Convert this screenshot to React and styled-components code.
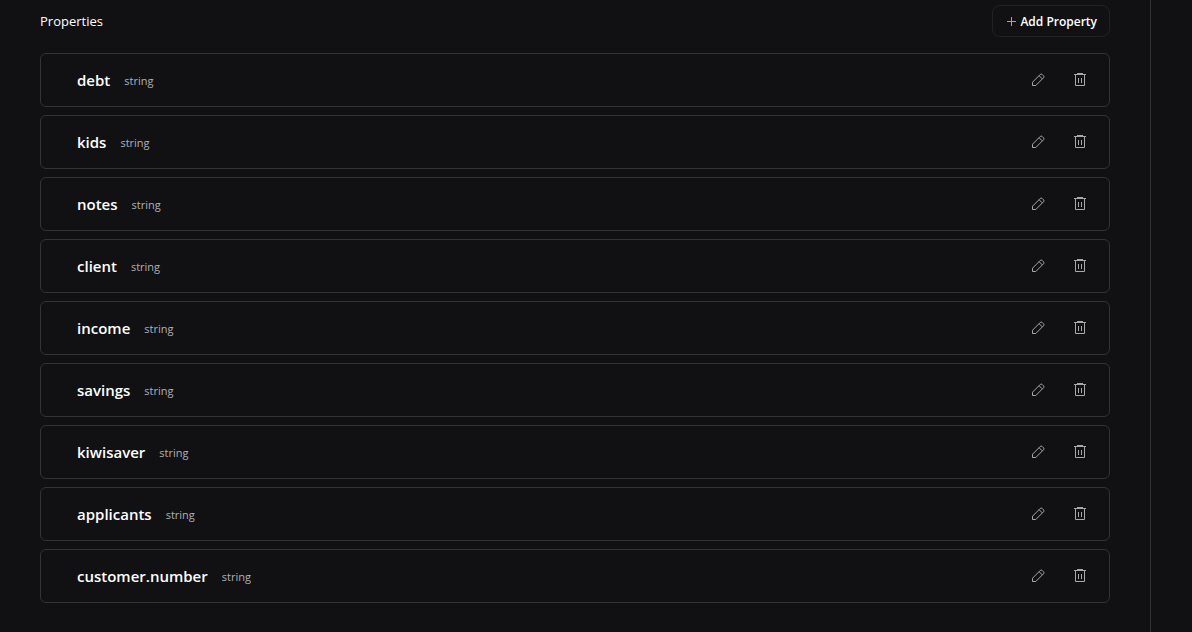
import React from "react";
import styled, { createGlobalStyle } from "styled-components";

const GlobalStyle = createGlobalStyle`
  * {
    box-sizing: border-box;
  }
  body {
    margin: 0;
    background-color: #111113;
    color: #ffffff;
    font-family: "Segoe UI", "Open Sans", "Noto Sans", sans-serif;
  }
`;

const properties = [
  { name: "debt", type: "string" },
  { name: "kids", type: "string" },
  { name: "notes", type: "string" },
  { name: "client", type: "string" },
  { name: "income", type: "string" },
  { name: "savings", type: "string" },
  { name: "kiwisaver", type: "string" },
  { name: "applicants", type: "string" },
  { name: "customer.number", type: "string" },
];

const Page = styled.div`
  display: flex;
  min-height: 100vh;
  padding-right: 41px;
`;

const Panel = styled.main`
  flex: 1;
  padding: 5px 40px 29px;
  border-right: 1px solid #333336;
`;

const Header = styled.header`
  display: flex;
  align-items: center;
  justify-content: space-between;
  margin-bottom: 16px;
`;

const Title = styled.h2`
  margin: 0;
  font-size: 13px;
  font-weight: 400;
  line-height: 20px;
`;

const AddButton = styled.button`
  display: flex;
  align-items: center;
  gap: 3px;
  height: 32px;
  padding: 0 12px;
  border: 1px solid #222225;
  border-radius: 8px;
  background-color: transparent;
  color: #ffffff;
  font-family: inherit;
  font-size: 12px;
  font-weight: 600;
  cursor: pointer;
`;

const PropertyList = styled.ul`
  display: flex;
  flex-direction: column;
  gap: 8px;
  margin: 0;
  padding: 0;
  list-style: none;
`;

const PropertyRow = styled.li`
  display: flex;
  align-items: center;
  justify-content: space-between;
  height: 54px;
  padding: 0 15px 0 36px;
  border: 1px solid #333336;
  border-radius: 6px;
`;

const PropertyLabel = styled.div`
  display: flex;
  align-items: flex-start;
  gap: 14px;
  padding-top: 2px;
`;

const PropertyName = styled.span`
  font-size: 15px;
  font-weight: 600;
  line-height: 26px;
`;

const PropertyType = styled.span`
  color: #b0b0b3;
  font-size: 11px;
  line-height: 28px;
`;

const Actions = styled.div`
  display: flex;
  gap: 14px;
`;

const IconButton = styled.button`
  display: flex;
  align-items: center;
  justify-content: center;
  width: 28px;
  height: 28px;
  padding: 0;
  border: none;
  background-color: transparent;
  color: #a8a8aa;
  cursor: pointer;
`;

const PlusIcon = () => (
  <svg width="12" height="12" viewBox="0 0 12 12" fill="none" stroke="#a4a4a7" aria-hidden="true">
    <path d="M6.5 2v9M2 6.5h9" />
  </svg>
);

const PencilIcon = () => (
  <svg width="14" height="14" viewBox="0 0 14 14" fill="none" stroke="currentColor" aria-hidden="true">
    <path d="M1.5 12.5V9.2L9.3 1.4q.9-.8 1.8 0l1.5 1.5q.8.9 0 1.8L4.8 12.5z" />
    <path d="M8.2 2.8l3 3" />
  </svg>
);

const TrashIcon = () => (
  <svg width="14" height="14" viewBox="0 0 14 14" fill="none" stroke="currentColor" aria-hidden="true">
    <path d="M1 1.5h12M4 .5h6M2.5 2v10.5h9V2M5.5 5v5M8.5 5v5" />
  </svg>
);

const App = () => {
  return (
    <Page>
      <GlobalStyle />
      <Panel>
        <Header>
          <Title>Properties</Title>
          <AddButton type="button">
            <PlusIcon />
            Add Property
          </AddButton>
        </Header>
        <PropertyList>
          {properties.map((property) => (
            <PropertyRow key={property.name}>
              <PropertyLabel>
                <PropertyName>{property.name}</PropertyName>
                <PropertyType>{property.type}</PropertyType>
              </PropertyLabel>
              <Actions>
                <IconButton type="button" aria-label={`Edit ${property.name}`}>
                  <PencilIcon />
                </IconButton>
                <IconButton type="button" aria-label={`Delete ${property.name}`}>
                  <TrashIcon />
                </IconButton>
              </Actions>
            </PropertyRow>
          ))}
        </PropertyList>
      </Panel>
    </Page>
  );
};

export default App;
